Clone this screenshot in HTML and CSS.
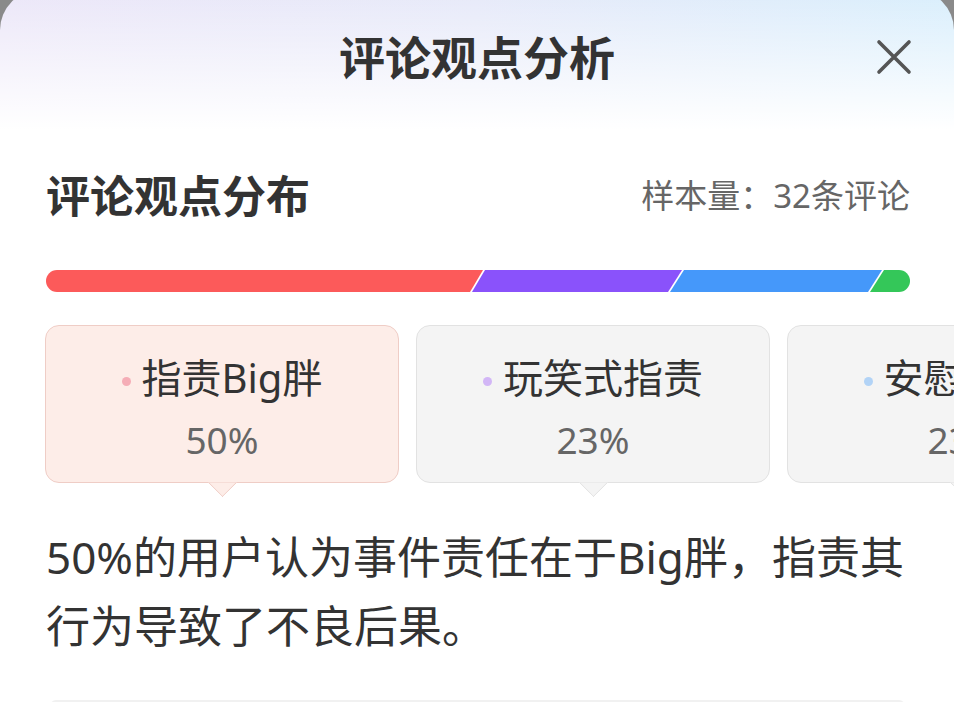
FILE: index.html
```html
<!DOCTYPE html>
<html lang="zh-CN">
<head>
<meta charset="utf-8">
<title>评论观点分析</title>
<link rel="stylesheet" href="styles.css">
</head>
<body>
<div class="sheet">
  <header class="header">
    <span></span>
    <h1 class="title">评论观点分析</h1>
    <button class="close" aria-label="关闭">
      <svg width="36" height="36" viewBox="0 0 36 36"><path d="M3 3 L33 33 M33 3 L3 33" stroke="#555" stroke-width="3.6" stroke-linecap="round" fill="none"/></svg>
    </button>
  </header>

  <section class="section">
    <div class="section-head">
      <h2 class="section-title">评论观点分布</h2>
      <span class="sample">样本量：32条评论</span>
    </div>

    <svg class="bar" width="864" height="22" viewBox="0 0 864 22">
      <defs><clipPath id="barclip"><rect x="0" y="0" width="864" height="22" rx="11" ry="11"/></clipPath></defs>
      <g clip-path="url(#barclip)">
        <polygon points="0,0 437,0 424,22 0,22" fill="#fc5a5a"/>
        <polygon points="439,0 636,0 622,22 426,22" fill="#8a52fb"/>
        <polygon points="638,0 836,0 822,22 624,22" fill="#4598fa"/>
        <polygon points="838,0 864,0 864,22 824,22" fill="#34c759"/>
      </g>
    </svg>

    <div class="cards">
      <div class="card card-active">
        <div class="card-label"><span class="dot dot-red"></span>指责Big胖</div>
        <div class="card-pct">50%</div>
      </div>
      <div class="card">
        <div class="card-label"><span class="dot dot-purple"></span>玩笑式指责</div>
        <div class="card-pct">23%</div>
      </div>
      <div class="card">
        <div class="card-label"><span class="dot dot-blue"></span>安慰Big胖</div>
        <div class="card-pct">23%</div>
      </div>
    </div>

    <p class="desc">50%的用户认为事件责任在于Big胖，指责其行为导致了不良后果。</p>

    <div class="divider"></div>
  </section>
</div>
</body>
</html>
```

FILE: styles.css
```css
* { box-sizing: border-box; }

html {
  background: #8a8a8a;
}

html, body {
  margin: 0;
  padding: 0;
}

body {
  background: #8a8a8a;
  font-family: "Noto Sans", "Noto Sans CJK SC", sans-serif;
  color: #333;
  width: 954px;
  height: 702px;
  overflow: hidden;
}

.sheet {
  margin-top: -10px;
  height: 712px;
  border-radius: 40px 40px 0 0;
  overflow: hidden;
  background:
    linear-gradient(to bottom, rgba(255,255,255,0) 0px, #ffffff 140px),
    linear-gradient(to right, #ebe6f8, #e6e9f9 50%, #d8eefc);
}

.header {
  margin-top: 10px;
  height: 114px;
  display: grid;
  grid-template-columns: 1fr auto 1fr;
  align-items: center;
}

.title {
  margin: 0;
  font-size: 46px;
  font-weight: 700;
  line-height: 60px;
  color: #333;
}

.close {
  justify-self: end;
  margin-right: 42px;
  width: 36px;
  height: 36px;
  padding: 0;
  border: 0;
  background: transparent;
  display: flex;
  align-items: center;
  justify-content: center;
}

.section {
  padding: 0 44px 0 46px;
}

.section-head {
  margin-top: 52px;
  height: 60px;
  display: flex;
  align-items: center;
  justify-content: space-between;
}

.section-title {
  margin: 0;
  font-size: 44px;
  font-weight: 700;
  line-height: 60px;
  color: #333;
}

.sample {
  font-size: 33px;
  color: #666;
  line-height: 40px;
}

.bar {
  display: block;
  margin-top: 44px;
}

.cards {
  margin-top: 33px;
  margin-left: -1px;
  display: flex;
  gap: 17px;
  margin-right: -44px;
  overflow: hidden;
  padding-bottom: 16px;
}

.card {
  position: relative;
  flex: 0 0 354px;
  height: 158px;
  padding-top: 28px;
  border: 1.5px solid #e2e2e2;
  border-radius: 14px;
  background: #f4f4f4;
  text-align: center;
}

.card::after {
  content: "";
  position: absolute;
  left: 50%;
  bottom: -11px;
  width: 20px;
  height: 20px;
  margin-left: -10px;
  background: inherit;
  border-right: 1.5px solid #e2e2e2;
  border-bottom: 1.5px solid #e2e2e2;
  transform: rotate(45deg);
  clip-path: polygon(100% 0, 100% 100%, 0 100%);
}

.card-active {
  background: #fdede8;
  border-color: #efcdc6;
}

.card-active::after {
  border-color: #efcdc6;
}

.card-label {
  display: flex;
  align-items: center;
  justify-content: center;
  gap: 11px;
  font-size: 40px;
  line-height: 48px;
  color: #333;
  white-space: nowrap;
}

.dot {
  width: 9px;
  height: 9px;
  border-radius: 50%;
  margin-top: 6px;
}

.dot-red { background: #f5adb6; }
.dot-purple { background: #d2b6f6; }
.dot-blue { background: #b2d3f6; }

.card-pct {
  margin-top: 14px;
  font-size: 37px;
  line-height: 48px;
  color: #666;
}

.desc {
  margin: 24px 0 0;
  font-size: 44px;
  line-height: 69px;
  color: #333;
}

.divider {
  margin: 39px 5px 0 4px;
  height: 6px;
  border-top: 2px solid #f1f1f1;
  border-radius: 6px 6px 0 0;
}
```
